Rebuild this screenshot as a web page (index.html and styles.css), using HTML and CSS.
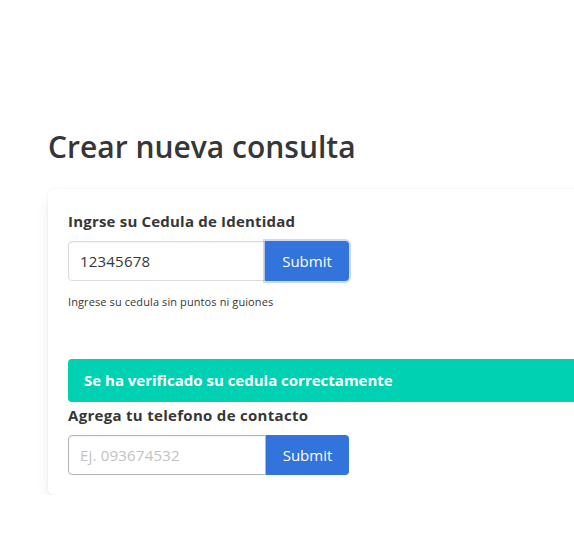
FILE: index.html
```html
<!DOCTYPE html>
<html lang="es">
<head>
<meta charset="utf-8">
<title>Crear nueva consulta</title>
<link rel="stylesheet" href="styles.css">
</head>
<body>
<section class="section">
  <h1 class="title">Crear nueva consulta</h1>
  <div class="box">
    <label class="label">Ingrse su Cedula de Identidad</label>
    <div class="field">
      <input class="input" type="text" value="12345678">
      <button class="button focused">Submit</button>
    </div>
    <p class="help">Ingrese su cedula sin puntos ni guiones</p>
    <div class="notification">Se ha verificado su cedula correctamente</div>
    <label class="label label-second">Agrega tu telefono de contacto</label>
    <div class="field">
      <input class="input input-second" type="text" placeholder="Ej. 093674532">
      <button class="button">Submit</button>
    </div>
  </div>
</section>
</body>
</html>
```
FILE: styles.css
```css
html, body {
  margin: 0;
  padding: 0;
  background: #fff;
  overflow: hidden;
}
body {
  font-family: "Open Sans", "Noto Sans", sans-serif;
  color: #363636;
}
.section {
  padding: 129px 0 0 48px;
}
.title {
  margin: 0 0 24px;
  font-size: 30px;
  font-weight: 600;
  line-height: 36px;
  color: #363636;
}
.box {
  width: 700px;
  background: #fff;
  border-radius: 6px;
  box-shadow: 0 8px 16px -3px rgba(10,10,10,0.12), 0 0 0 1px rgba(10,10,10,0.02);
  padding: 20px;
}
.label {
  display: block;
  font-size: 15px;
  font-weight: 700;
  line-height: 24px;
  letter-spacing: 0.2px;
  margin-bottom: 8px;
  color: #363636;
}
.label-second {
  margin-top: 1px;
  letter-spacing: 0.3px;
}
.field {
  display: flex;
}
.input {
  box-sizing: border-box;
  width: 197px;
  height: 40px;
  border: 1px solid #dbdbdb;
  border-radius: 4px 0 0 4px;
  padding: 0 11px;
  font-family: "Open Sans", sans-serif;
  font-size: 15px;
  letter-spacing: 0.2px;
  color: #363636;
  outline: none;
  box-shadow: inset 0 1px 2px rgba(10,10,10,0.05);
}
.input-second {
  width: 198px;
  border-color: #b5b5b5;
}
.input::placeholder {
  color: #c2c2c2;
}
.button {
  box-sizing: border-box;
  height: 40px;
  width: 84px;
  border: none;
  border-radius: 0 4px 4px 0;
  background: #3273dc;
  color: #fff;
  font-family: "Open Sans", sans-serif;
  font-size: 15px;
  font-weight: 400;
  padding: 0;
}
.input-second + .button {
  width: 83px;
}
.focused {
  box-shadow: 0 0 0 2px rgba(50,115,220,0.25);
}
.help {
  margin: 12px 0 0;
  font-size: 11px;
  line-height: 18px;
  letter-spacing: 0.1px;
  color: #363636;
}
.notification {
  margin-top: 48px;
  background: #00d1b2;
  color: #fff;
  font-weight: 700;
  font-size: 15px;
  height: 43px;
  line-height: 43px;
  padding-left: 16px;
  border-radius: 4px 0 0 4px;
}
```
